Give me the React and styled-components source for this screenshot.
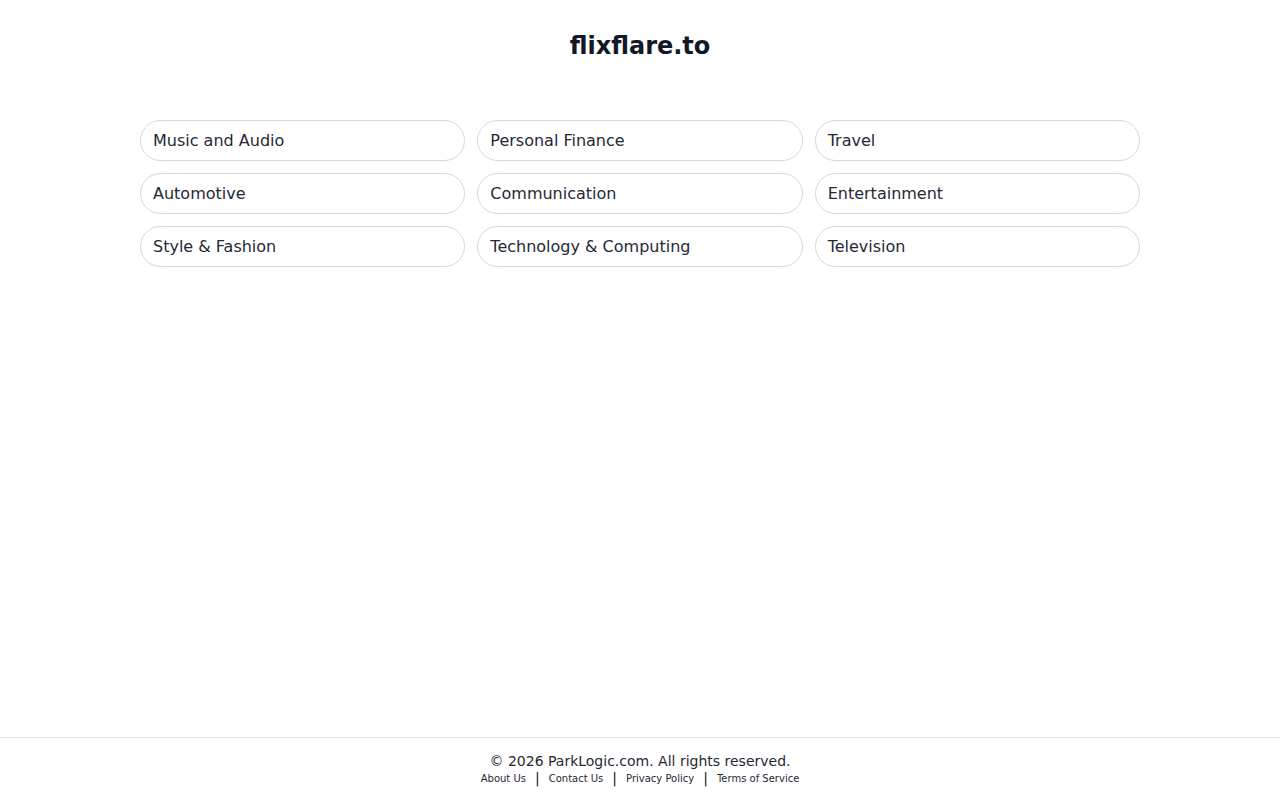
import React from "react";
import styled, { createGlobalStyle } from "styled-components";

const GlobalStyle = createGlobalStyle`
  html, body { margin: 0; padding: 0; background: #ffffff; }
  body { font-family: "DejaVu Sans", "Liberation Sans", sans-serif; color: #1f2937; }
  * { box-sizing: border-box; }
`;

const Page = styled.div`
  min-height: 100vh;
  display: flex;
  flex-direction: column;
`;

const Main = styled.main`
  flex: 1;
  display: flex;
  flex-direction: column;
  align-items: center;
`;

const Title = styled.h1`
  margin: 0;
  padding-top: 32px;
  font-size: 24px;
  line-height: 28px;
  font-weight: 700;
  color: #111827;
`;

const Grid = styled.div`
  margin-top: 60px;
  width: 1000px;
  display: grid;
  grid-template-columns: repeat(3, 1fr);
  gap: 12px;
`;

const Pill = styled.a`
  display: block;
  border: 1px solid #d6d6e0;
  border-radius: 999px;
  padding: 10px 12px;
  font-size: 16px;
  line-height: 19px;
  color: #1f2937;
  text-decoration: none;
  background: #fff;
`;

const Footer = styled.footer`
  border-top: 1px solid #e5e7eb;
  padding: 15px 0 14px;
  display: flex;
  flex-direction: column;
  align-items: center;
`;

const Copy = styled.div`
  font-size: 14px;
  line-height: 17px;
  color: #1f2937;
`;

const Links = styled.nav`
  display: flex;
  align-items: center;
  font-size: 10px;
  line-height: 15px;
  margin-top: 1px;
`;

const FootLink = styled.a`
  color: #1f2937;
  text-decoration: none;
`;

const Sep = styled.span`
  font-size: 14px;
  line-height: 15px;
  margin: 0 9px;
  color: #111827;
`;

const topics = [
  "Music and Audio",
  "Personal Finance",
  "Travel",
  "Automotive",
  "Communication",
  "Entertainment",
  "Style & Fashion",
  "Technology & Computing",
  "Television",
];

const footerLinks = ["About Us", "Contact Us", "Privacy Policy", "Terms of Service"];

export default function App() {
  return (
    <Page>
      <GlobalStyle />
      <Main>
        <Title>flixflare.to</Title>
        <Grid>
          {topics.map((t) => (
            <Pill key={t} href="#">{t}</Pill>
          ))}
        </Grid>
      </Main>
      <Footer>
        <Copy>© 2026 ParkLogic.com. All rights reserved.</Copy>
        <Links>
          {footerLinks.map((l, i) => (
            <React.Fragment key={l}>
              {i > 0 && <Sep>|</Sep>}
              <FootLink href="#">{l}</FootLink>
            </React.Fragment>
          ))}
        </Links>
      </Footer>
    </Page>
  );
}
